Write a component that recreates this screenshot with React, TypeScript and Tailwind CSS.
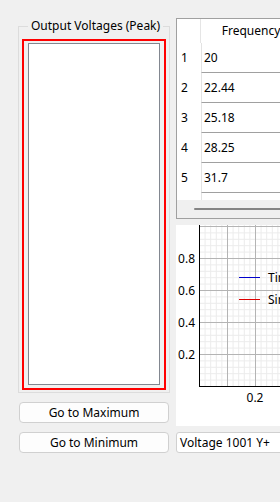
const rows = ["20", "22.44", "25.18", "28.25", "31.7", ""];

const Chart = () => {
  const x = (u: number) => 23 + 280 * u;
  const y = (v: number) => 161 - 160 * v;
  const minorX: number[] = [];
  for (let i = 0; i <= 40; i++) minorX.push(23 + i * 5.6);
  const minorY: number[] = [];
  for (let i = 0; i <= 25; i++) minorY.push(161 - i * 6.4);
  return (
    <svg width="200" height="201" className="block">
      <rect x="0" y="0" width="200" height="201" fill="#ffffff" />
      {minorX.map((px) => (
        <line key={"mx" + px} x1={px + 0.5} x2={px + 0.5} y1="0" y2="161" stroke="#ececec" />
      ))}
      {minorY.map((py) => (
        <line key={"my" + py} x1="23" x2="200" y1={py + 0.5} y2={py + 0.5} stroke="#ececec" />
      ))}
      {[0.1, 0.2, 0.3, 0.4, 0.5, 0.6].map((u) => (
        <line key={"X" + u} x1={x(u) + 0.5} x2={x(u) + 0.5} y1="0" y2="161" stroke="#b4b4b4" />
      ))}
      {[0.2, 0.4, 0.6, 0.8, 1.0].map((v) => (
        <line key={"Y" + v} x1="23" x2="200" y1={Math.round(y(v)) + 0.5} y2={Math.round(y(v)) + 0.5} stroke="#b4b4b4" />
      ))}
      <line x1="23.5" x2="23.5" y1="0" y2="161.5" stroke="#000" />
      <line x1="23" x2="200" y1="161.5" y2="161.5" stroke="#000" />
      {[0.8, 0.6, 0.4, 0.2].map((v) => (
        <text
          key={"l" + v}
          x="19"
          y={y(v) + 4.5}
          textAnchor="end"
          fontSize="12"
          fontFamily="'Noto Sans', sans-serif"
          fill="#000"
        >
          {v.toFixed(1)}
        </text>
      ))}
      <text x={x(0.2)} y="176.5" textAnchor="middle" fontSize="12" fontFamily="'Noto Sans', sans-serif" fill="#000">
        0.2
      </text>
      <line x1="63" x2="84" y1="52.5" y2="52.5" stroke="#0000cc" />
      <text x="92" y="56.5" fontSize="12" fontFamily="'Noto Sans', sans-serif" fill="#000">
        Time
      </text>
      <line x1="63" x2="84" y1="74.5" y2="74.5" stroke="#dd0000" />
      <text x="92" y="78.5" fontSize="12" fontFamily="'Noto Sans', sans-serif" fill="#000">
        Sine
      </text>
    </svg>
  );
};

export default function App() {
  return (
    <div
      className="w-[280px] h-[502px] bg-[#f0f0f0] overflow-hidden flex pt-[18px] text-[12px] text-black"
      style={{ fontFamily: "'Noto Sans', sans-serif" }}
    >
      <div className="ml-[18px] w-[152px] shrink-0 flex flex-col">
        <fieldset className="border border-[#dcdcdc] px-[3px] pb-[2px] h-[375px]">
          <legend className="ml-[6px] px-[3px] leading-[16px] whitespace-nowrap">Output Voltages (Peak)</legend>
          <div className="mt-[5px] h-[351px] border-2 border-[#ff0000] pt-[2px] px-[4px] pb-[3px]">
            <div className="h-full bg-white border border-[#828790]"></div>
          </div>
        </fieldset>
        <button className="mx-[1px] mt-[9px] h-[21px] bg-[#fdfdfd] border border-[#d0d0d0] rounded-[4px] leading-[19px]">
          Go to Maximum
        </button>
        <button className="mx-[1px] mt-[9px] h-[21px] bg-[#fdfdfd] border border-[#d0d0d0] rounded-[4px] leading-[19px]">
          Go to Minimum
        </button>
      </div>

      <div className="ml-[6px] w-[200px] shrink-0 flex flex-col">
        <div className="h-[201px] border border-[#a0a0a0] bg-white flex flex-col">
          <div className="h-[181px] overflow-hidden">
            <div className="flex h-[24px]">
              <div className="w-[24px] border-r border-[#e5e5e5]"></div>
              <div className="w-[100px] flex items-center justify-center">Frequency</div>
            </div>
            {rows.map((r, i) => (
              <div key={i} className="flex h-[30px]">
                <div className="w-[24px] flex items-center pl-[4px]">{r ? i + 1 : ""}</div>
                <div className="flex-1 flex items-center pl-[2px] border-l border-[#e3e3e3] border-b border-b-[#a0a0a0]">
                  {r}
                </div>
              </div>
            ))}
          </div>
          <div className="h-[18px] bg-[#f0f0f0] flex items-center pl-[17px]">
            <div className="h-[2px] flex-1 bg-[#858585] rounded-full"></div>
          </div>
        </div>
        <div className="mt-[6px]">
          <Chart />
        </div>
        <div className="mt-[6px] h-[21px] bg-white border border-[#d0d0d0] rounded-[3px] flex items-center pl-[3px] whitespace-nowrap">
          Voltage 1001 Y+
        </div>
      </div>
    </div>
  );
}
